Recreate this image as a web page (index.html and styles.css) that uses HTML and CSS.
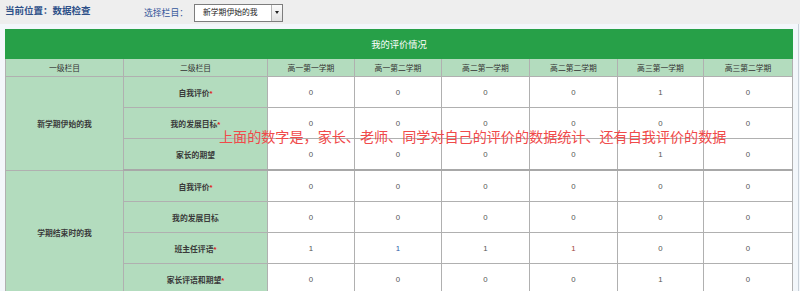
FILE: index.html
```html
<!DOCTYPE html>
<html lang="zh-CN">
<head>
    <meta charset="UTF-8">
    <title>数据检查</title>
    <link rel="stylesheet" href="styles.css">
</head>
<body>
    <div class="topbar">
        <span class="crumb">当前位置：数据检查</span>
        <span class="picker">
            <span class="picker-label">选择栏目：</span>
            <span class="select">
                <span class="select-text">新学期伊始的我</span>
                <span class="select-btn"><i class="arrow"></i></span>
            </span>
        </span>
    </div>

    <div class="main">
        <table class="stats">
            <colgroup>
                <col style="width:118px">
                <col style="width:144px">
                <col style="width:87px">
                <col style="width:87px">
                <col style="width:88px">
                <col style="width:88px">
                <col style="width:86px">
                <col style="width:89px">
            </colgroup>
            <tr class="title-row">
                <th colspan="8">我的评价情况</th>
            </tr>
            <tr class="head-row">
                <th>一级栏目</th>
                <th>二级栏目</th>
                <th>高一第一学期</th>
                <th>高一第二学期</th>
                <th>高二第一学期</th>
                <th>高二第二学期</th>
                <th>高三第一学期</th>
                <th>高三第二学期</th>
            </tr>
            <tr>
                <td class="group" rowspan="3">新学期伊始的我</td>
                <td class="item">自我评价<span class="req">*</span></td>
                <td>0</td><td>0</td><td>0</td><td>0</td><td>1</td><td>0</td>
            </tr>
            <tr>
                <td class="item">我的发展目标<span class="req">*</span></td>
                <td>0</td><td>0</td><td>0</td><td>0</td><td>0</td><td>0</td>
            </tr>
            <tr class="group-end">
                <td class="item">家长的期望</td>
                <td>0</td><td>0</td><td>0</td><td>0</td><td>1</td><td>0</td>
            </tr>
            <tr>
                <td class="group" rowspan="4">学期结束时的我</td>
                <td class="item">自我评价<span class="req">*</span></td>
                <td>0</td><td>0</td><td>0</td><td>0</td><td>0</td><td>0</td>
            </tr>
            <tr>
                <td class="item">我的发展目标</td>
                <td>0</td><td>0</td><td>0</td><td>0</td><td>0</td><td>0</td>
            </tr>
            <tr>
                <td class="item">班主任评语<span class="req">*</span></td>
                <td>1</td><td class="blue">1</td><td>1</td><td class="brown">1</td><td>0</td><td>0</td>
            </tr>
            <tr>
                <td class="item">家长评语和期望<span class="req">*</span></td>
                <td>0</td><td>0</td><td>0</td><td>0</td><td>1</td><td>0</td>
            </tr>
        </table>

        <p class="note">上面的数字是，家长、老师、同学对自己的评价的数据统计、还有自我评价的数据</p>
    </div>
</body>
</html>
```

FILE: styles.css
```css
body {
    margin: 0;
    height: 291px;
    overflow: hidden;
    font-family: "Liberation Sans", "Noto Sans CJK SC", sans-serif;
    background-color: #f3f7fb;
}

.topbar {
    display: flex;
    align-items: center;
    height: 24px;
    padding-left: 5px;
    background-color: #eeeeee;
}

.crumb {
    width: 139px;
    font-size: 9.5px;
    font-weight: bold;
    color: #2f5189;
    padding-bottom: 4px;
}

.picker {
    display: flex;
    align-items: center;
    padding-top: 1px;
}

.picker-label {
    width: 50px;
    font-size: 8.8px;
    color: #34569a;
}

.select {
    display: flex;
    width: 89px;
    height: 18px;
    box-sizing: border-box;
    border: 1px solid #7d7d7d;
    background-color: #fff;
}

.select-text {
    flex: 1;
    padding-left: 8px;
    font-size: 7.8px;
    line-height: 16px;
    color: #222;
}

.select-btn {
    display: flex;
    align-items: center;
    justify-content: center;
    width: 10px;
    border-left: 1px solid #b5b5b5;
    background: linear-gradient(#fbfbfb, #e2e2e2);
}

.arrow {
    width: 0;
    height: 0;
    border-left: 2px solid transparent;
    border-right: 2px solid transparent;
    border-top: 3px solid #222;
}

.main {
    position: relative;
    width: 799px;
    height: 267px;
    box-sizing: border-box;
    padding: 5px 0 0 5px;
    border-right: 1px solid #c9d1d9;
}

.stats {
    width: 787px;
    table-layout: fixed;
    border-collapse: collapse;
    border: 1px solid #b0b0b0;
    font-size: 7.8px;
    color: #444;
    text-align: center;
}

.stats th,
.stats td {
    padding: 0;
    border: 1px solid #b0b0b0;
}

.title-row th {
    height: 28px;
    background-color: #27a048;
    color: #fff;
    font-size: 9.3px;
    font-weight: normal;
    border-color: #27a048;
}

.head-row th {
    height: 17px;
    background-color: #b3dcbe;
    font-weight: normal;
    color: #333;
}

.stats td {
    height: 30px;
    background-color: #fff;
    color: #555;
}

.stats td.group,
.stats td.item {
    background-color: #b3dcbe;
    font-weight: bold;
    color: #3a3a3a;
}

.group-end td {
    border-bottom: 2px solid #a8a8a8;
}

.req {
    color: #e02020;
}

.stats td.blue {
    color: #2a5ca8;
}

.stats td.brown {
    color: #a0443c;
}

.note {
    position: absolute;
    left: 219px;
    top: 104px;
    margin: 0;
    font-family: "Noto Sans CJK SC", sans-serif;
    font-size: 14.1px;
    line-height: 16px;
    color: #f04a4a;
    white-space: nowrap;
}
```
